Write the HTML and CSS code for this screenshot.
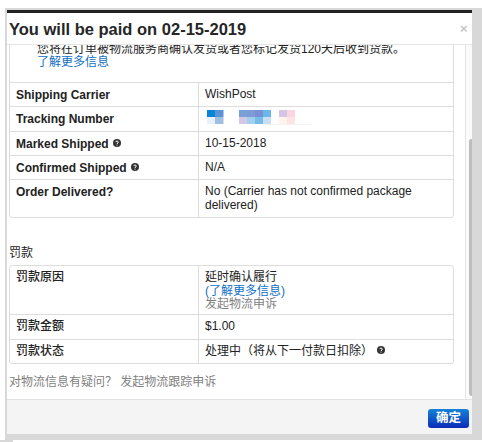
FILE: index.html
```html
<!DOCTYPE html>
<html lang="zh">
<head>
<meta charset="utf-8">
<title>You will be paid on 02-15-2019</title>
<link rel="stylesheet" href="styles.css">
</head>
<body>
<div class="backdrop">
  <div class="modal">
    <header class="modal-head">
      <h1>You will be paid on 02-15-2019</h1>
      <span class="close">×</span>
    </header>
    <div class="modal-body">
      <div class="content">
        <table class="info info-first">
          <colgroup><col class="col-label"><col></colgroup>
          <tr class="notice"><td colspan="2">
            <div class="notice-text">您将在订单被物流服务商确认发货或者您标记发货120天后收到货款。<br><a href="#">了解更多信息</a></div>
          </td></tr>
          <tr><th>Shipping Carrier</th><td>WishPost</td></tr>
          <tr><th>Tracking Number</th><td class="tracking">
            <svg width="104" height="17" viewBox="0 0 104 17">
              <rect x="0" y="0" width="8" height="7" fill="#0a84d6"/><rect x="8" y="0" width="8.5" height="7" fill="#5b93d8"/>
              <rect x="0" y="7" width="8" height="7" fill="#e6f1fb"/><rect x="8" y="7" width="8.5" height="7" fill="#a0bfe0"/>
              <rect x="32" y="0" width="8" height="7" fill="#7aa0d8"/><rect x="40" y="0" width="8" height="7" fill="#7e9bd8"/><rect x="48" y="0" width="8" height="7" fill="#7b90d4"/><rect x="56" y="0" width="8" height="7" fill="#6ab8ea"/>
              <rect x="32" y="7" width="8" height="7" fill="#d4c8e6"/><rect x="40" y="7" width="8" height="7" fill="#a0d0f0"/><rect x="48" y="7" width="8" height="7" fill="#72bce6"/><rect x="56" y="7" width="8" height="7" fill="#c8def4"/>
              <rect x="72" y="0" width="8" height="7" fill="#d4c5e2"/><rect x="80" y="0" width="8" height="7" fill="#fbd5e0"/>
              <rect x="72" y="7" width="8" height="7" fill="#fff4ec"/><rect x="80" y="7" width="8" height="7" fill="#fde2e6"/>
              <rect x="58" y="14" width="46" height="1" fill="#f2f2f2"/>
            </svg>
          </td></tr>
          <tr><th>Marked Shipped <svg class="help" viewBox="0 0 8 8"><circle cx="4" cy="4" r="4"/><path d="M2.7 3.1C2.8 1.7 5.3 1.7 5.3 3.1 5.3 4 4 4 4 5M4 5.7V6.6"/></svg></th><td>10-15-2018</td></tr>
          <tr><th>Confirmed Shipped <svg class="help" viewBox="0 0 8 8"><circle cx="4" cy="4" r="4"/><path d="M2.7 3.1C2.8 1.7 5.3 1.7 5.3 3.1 5.3 4 4 4 4 5M4 5.7V6.6"/></svg></th><td>N/A</td></tr>
          <tr><th>Order Delivered?</th><td>No (Carrier has not confirmed package delivered)</td></tr>
        </table>
        <div class="section-title">罚款</div>
        <table class="info">
          <colgroup><col class="col-label"><col></colgroup>
          <tr class="reason"><th class="plain">罚款原因</th><td>延时确认履行<br><a href="#">(了解更多信息)</a><br><a class="muted" href="#">发起物流申诉</a></td></tr>
          <tr><th class="plain">罚款金额</th><td>$1.00</td></tr>
          <tr><th class="plain">罚款状态</th><td>处理中（将从下一付款日扣除） <svg class="help" viewBox="0 0 8 8"><circle cx="4" cy="4" r="4"/><path d="M2.7 3.1C2.8 1.7 5.3 1.7 5.3 3.1 5.3 4 4 4 4 5M4 5.7V6.6"/></svg></td></tr>
        </table>
        <div class="dispute">对物流信息有疑问？ 发起物流跟踪申诉</div>
      </div>
      <div class="scrollbar"><div class="thumb"></div></div>
    </div>
    <footer class="modal-foot"><button class="confirm" type="button">确定</button></footer>
  </div>
</div>
<div class="foot-strip"></div>
</body>
</html>
```
FILE: styles.css
```css
html, body {
  margin: 0;
  height: 442px;
  overflow: hidden;
  background: #fff;
}
body {
  font-family: "Liberation Sans", "Noto Sans CJK SC", sans-serif;
  font-size: 12px;
  line-height: 13.4px;
  color: #222;
}
.backdrop {
  margin: 8px 0 0 5px;
  padding: 2px 10px 6px 2px;
  background: #d8d8d8;
}
.foot-strip {
  width: 13px;
  height: 2px;
  background: #d8d8d8;
}
.modal {
  height: 424px;
  display: flex;
  flex-direction: column;
  background: #fff;
  border-top: 3px solid #222;
  box-sizing: border-box;
}
.modal-head {
  height: 32px;
  flex: none;
  box-sizing: border-box;
  display: flex;
  align-items: center;
  justify-content: space-between;
  padding: 1px 2px 0 2px;
  border-bottom: 1px solid #e5e5e5;
}
.modal-head h1 {
  margin: 0;
  font-size: 16.5px;
  line-height: 22px;
  font-weight: bold;
  color: #262626;
}
.close {
  font-size: 13px;
  font-weight: bold;
  color: #c8c8c8;
  width: 10px;
}
.modal-body {
  flex: 1;
  min-height: 0;
  display: flex;
}
.content {
  flex: 1;
  min-width: 0;
  overflow: hidden;
  padding: 0 11px 0 2px;
}
.scrollbar {
  flex: none;
  width: 7px;
  border-left: 1px solid #e5e5e5;
  background: #fafafa;
  padding: 94px 0 3px 3px;
  box-sizing: border-box;
}
.thumb {
  height: 100%;
  background: #bdbdbd;
  border-radius: 3px 0 0 4px;
}
.info {
  width: 100%;
  border-collapse: separate;
  border-spacing: 0;
  border: 1px solid #ddd;
  border-radius: 3px;
  table-layout: fixed;
}
.col-label {
  width: 189px;
}
.info-first {
  margin-top: -8px;
}
.info th, .info td {
  padding: 5px 6px;
  text-align: left;
  vertical-align: top;
  border-top: 1px solid #ddd;
  font-size: 12px;
  line-height: 13.4px;
}
.info tr:first-child > th, .info tr:first-child > td {
  border-top: 0;
}
.info th {
  font-weight: bold;
  border-right: 1px solid #ddd;
  padding-top: 6px;
  padding-bottom: 4px;
}
.info th.plain {
  font-weight: 500;
  padding-top: 5px;
  padding-bottom: 5px;
}
.info .reason td {
  padding-bottom: 3px;
}
.info .notice td {
  padding: 0 0 12px 27px;
}
.notice-text {
  padding-top: 5px;
}
a {
  color: #0f6fc6;
  text-decoration: none;
}
a.muted {
  color: #7f7f7f;
}
.tracking {
  height: 13px;
}
.tracking svg {
  display: block;
  margin: -2px 0 -2px 2px;
}
.help {
  display: inline-block;
  width: 8px;
  height: 8px;
  vertical-align: 1px;
  margin-left: 1px;
  fill: #333;
  stroke: none;
}
.help path {
  fill: none;
  stroke: #fff;
  stroke-width: 1;
}
.section-title {
  margin: 28px 0 5px 0;
  line-height: 14px;
}
.dispute {
  margin-top: 11px;
  color: #7f7f7f;
  line-height: 14px;
}
.modal-foot {
  flex: none;
  height: 35px;
  box-sizing: border-box;
  border-top: 1px solid #e2e2e2;
  background: #f4f4f4;
  display: flex;
  justify-content: flex-end;
  align-items: flex-start;
  padding: 9px 3px 0 0;
}
.confirm {
  width: 41px;
  height: 19px;
  padding: 0;
  border: 0;
  border-radius: 3px;
  background: linear-gradient(#1482d8, #0c2cb8);
  color: #fff;
  font: bold 12.5px/19px "Liberation Sans", "Noto Sans CJK SC", sans-serif;
}
```
